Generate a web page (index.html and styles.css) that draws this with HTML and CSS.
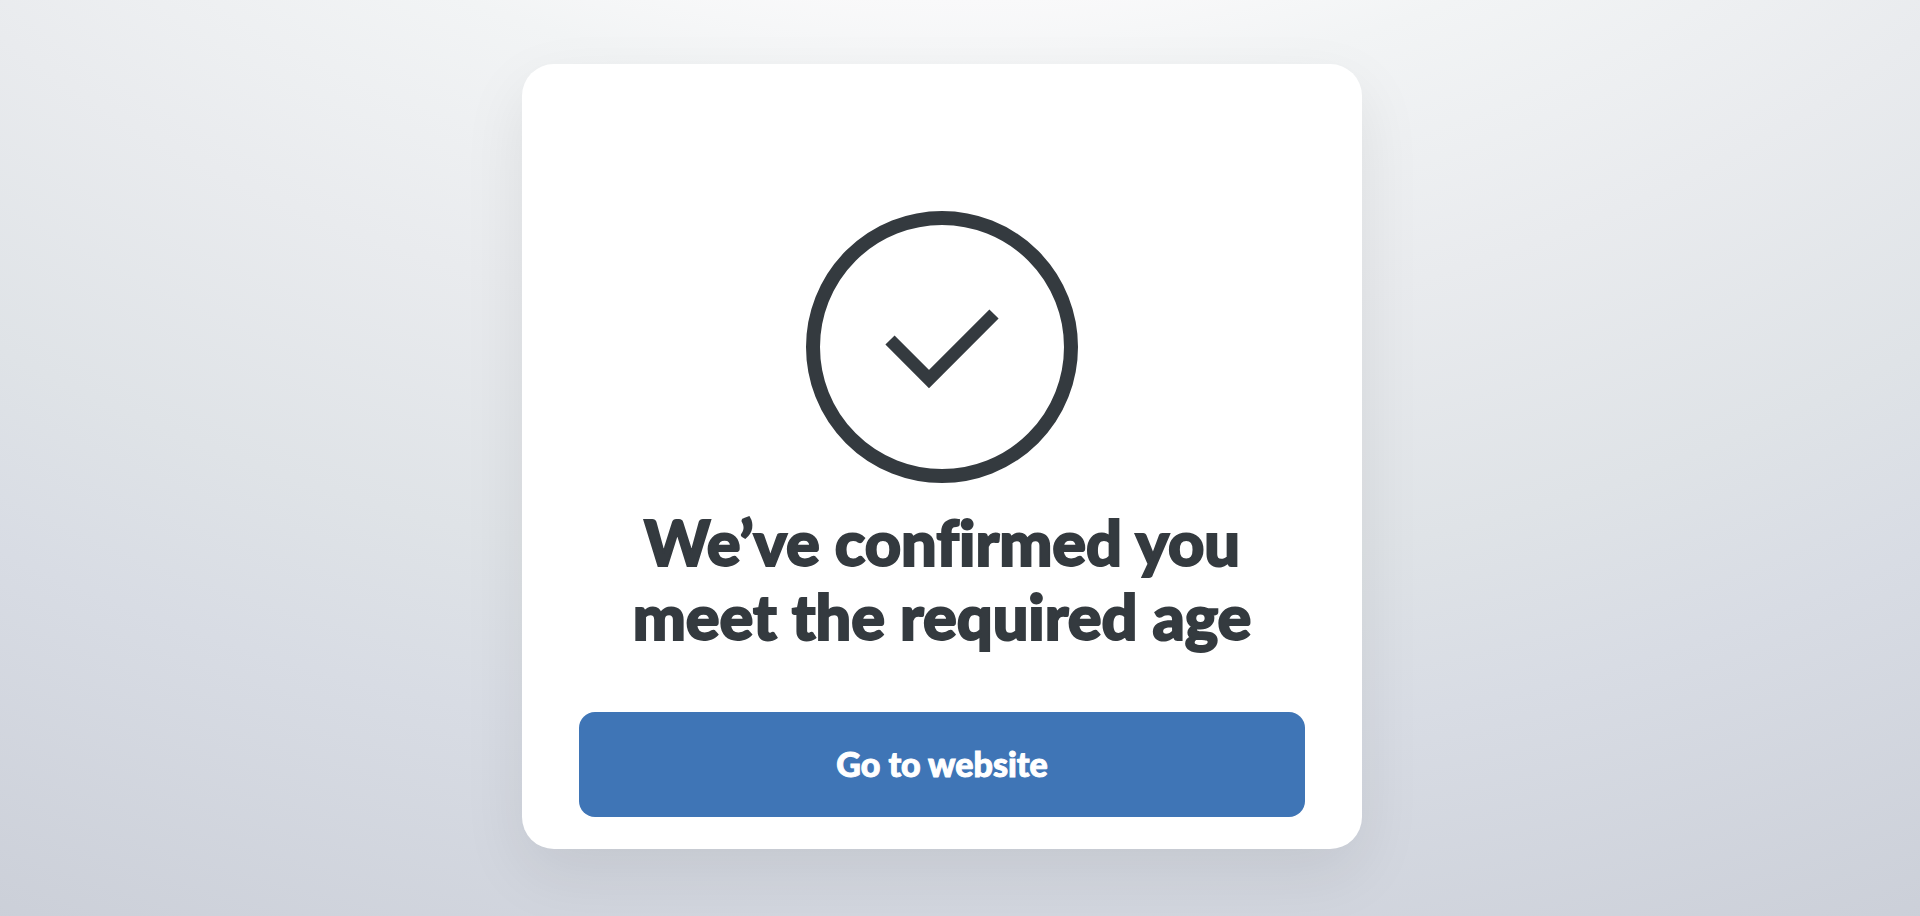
FILE: index.html
```html
<!DOCTYPE html>
<html lang="en">
<head>
  <meta charset="UTF-8" />
  <meta name="viewport" content="width=device-width, initial-scale=1.0"/>
  <title>Age confirmed</title>
  <link rel="stylesheet" href="styles.css">
</head>
<body>
  <main class="card">
    <svg class="check" viewBox="0 0 272 272" aria-hidden="true">
      <circle cx="136" cy="136" r="129" />
      <path d="M84 129 L123 168 L188 103" />
    </svg>
    <h1 class="title">We’ve confirmed you meet the required age</h1>
    <button class="go" type="button">Go to website</button>
  </main>
</body>
</html>
```
FILE: styles.css
```css
* {
  box-sizing: border-box;
}

body {
  margin: 0;
  padding: 64px 36px 64px 0;
  min-height: 100vh;
  background: radial-gradient(ellipse 122% 207% at 50% -87%, #f9f9fa 42%, #f2f4f5 47%, #e9ebee 60%, #dfe3e7 73%, #d8dce4 82%, #cbcfd8 100%);
  font-family: Lato, sans-serif;
  color: #343a3f;
}

.card {
  display: flex;
  flex-direction: column;
  align-items: center;
  max-width: 840px;
  margin: 0 auto;
  padding: 147px 57px 32px;
  background: #fff;
  border-radius: 32px;
  box-shadow: 0 24px 64px rgba(0, 0, 0, 0.08);
}

.check {
  width: 272px;
  max-width: 100%;
  fill: none;
  stroke: #343a3f;
}

.check circle {
  stroke-width: 14;
}

.check path {
  stroke-width: 13;
}

.title {
  max-width: 660px;
  margin: 22px 0 59px;
  font-size: 63px;
  font-weight: 900;
  line-height: 74px;
  text-align: center;
  font-variant-ligatures: none;
  -webkit-text-stroke: 2px #343a3f;
}

.go {
  width: 100%;
  padding: 31px 32px 33px;
  border: none;
  border-radius: 16px;
  background: #3f75b6;
  color: #fff;
  font-family: inherit;
  font-size: 34px;
  font-weight: 900;
  line-height: 41px;
  -webkit-text-stroke: 1px #fff;
  cursor: pointer;
}

.go:hover {
  background: #3668a4;
}
```
